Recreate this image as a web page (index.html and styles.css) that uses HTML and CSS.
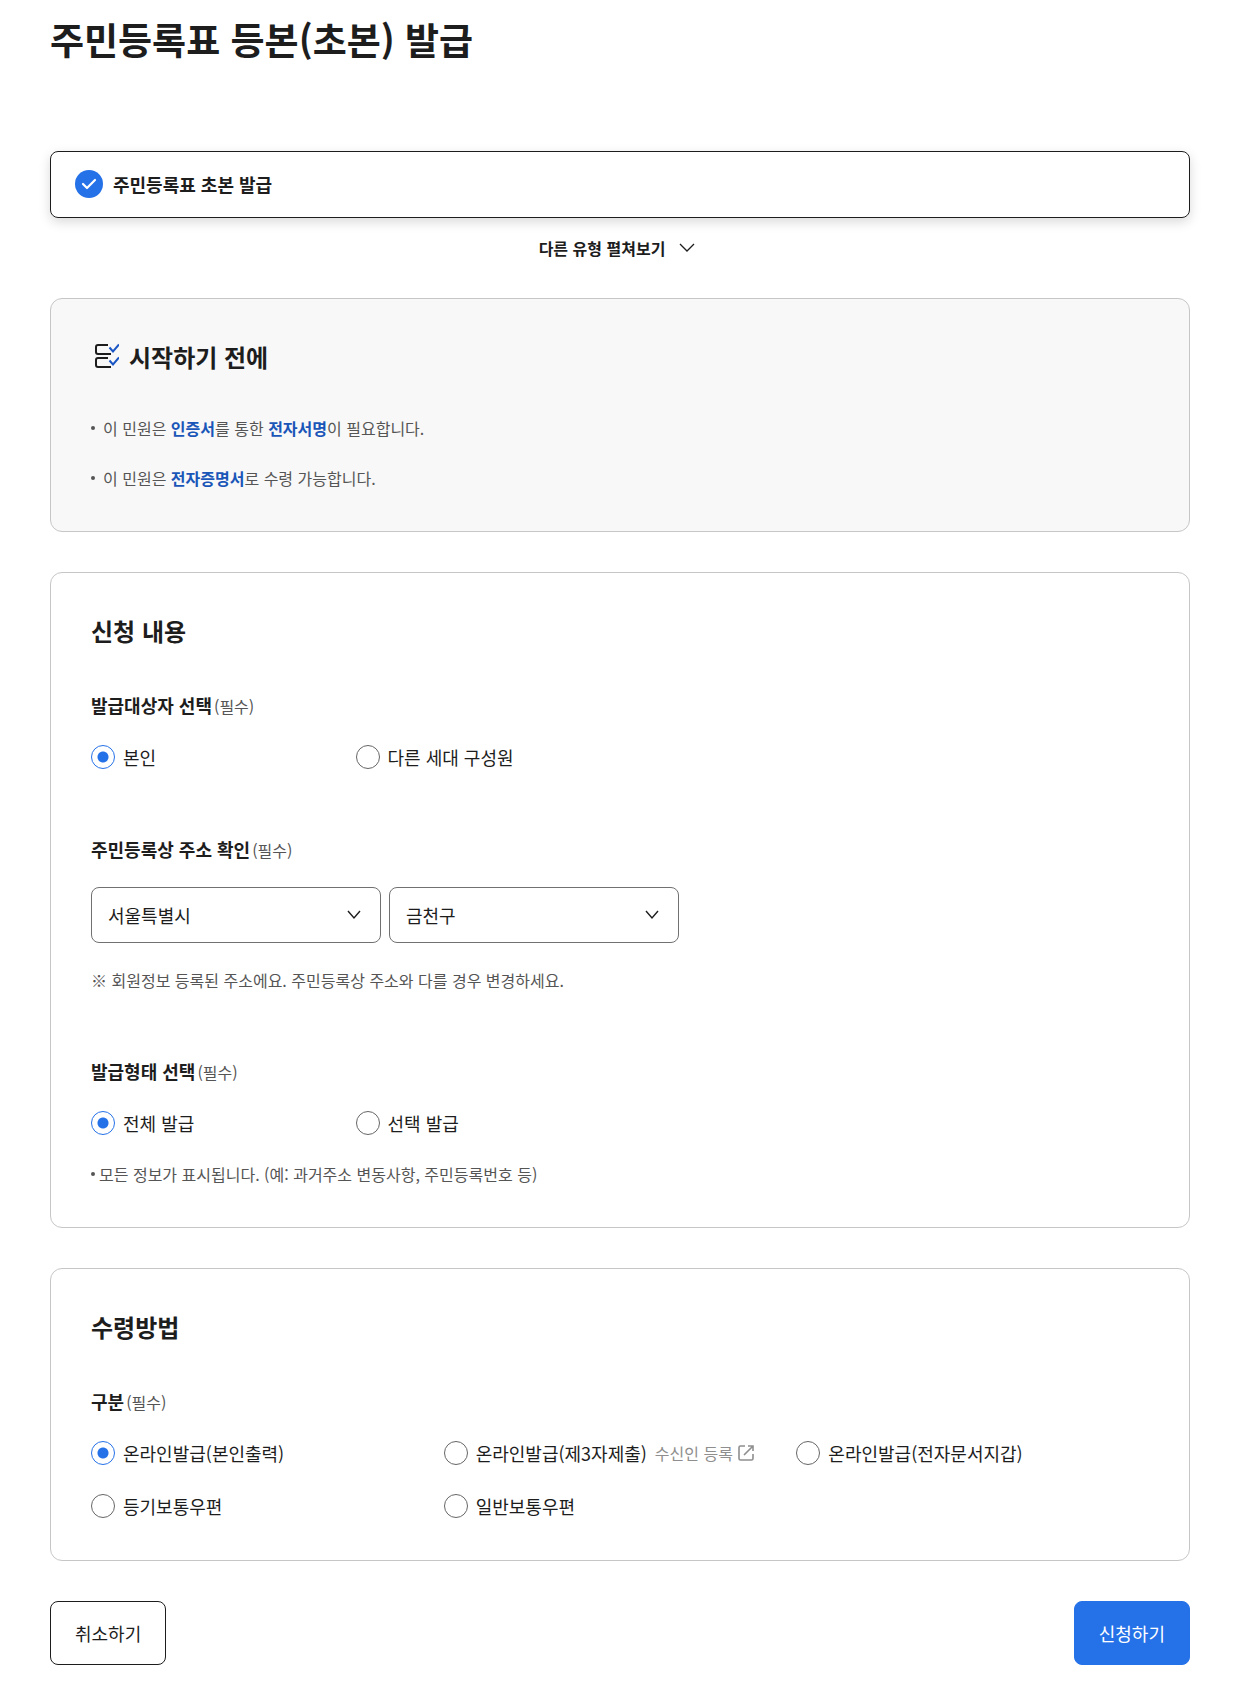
FILE: index.html
```html
<!DOCTYPE html>
<html lang="ko">
<head>
    <meta charset="UTF-8">
    <meta name="viewport" content="width=device-width, initial-scale=1.0">
    <title>주민등록표 등본(초본) 발급</title>
    <link rel="stylesheet" href="styles.css">
</head>
<body>
    <main class="container">
        <h1 class="page-title">주민등록표 등본(초본) 발급</h1>

        <!-- 민원 유형 -->
        <div class="type-card">
            <svg class="type-check" width="28" height="28" viewBox="0 0 28 28" fill="none" aria-hidden="true">
                <circle cx="14" cy="14" r="14" fill="#2571e8"/>
                <path d="M8 14l4 4 8-8" stroke="#fff" stroke-width="2.200" stroke-linecap="round" stroke-linejoin="round"/>
            </svg>
            <strong>주민등록표 초본 발급</strong>
        </div>
        <button type="button" class="btn-expand">
            다른 유형 펼쳐보기
            <svg width="16" height="10" viewBox="0 0 16 10" fill="none" stroke="#1d1d1d" stroke-width="1.3" aria-hidden="true">
                <path d="M1 1l7 7 7-7"/>
            </svg>
        </button>

        <!-- 안내 -->
        <section class="card card-guide">
            <h2 class="card-title">
                <svg class="guide-icon" width="28" height="28" viewBox="0 0 28 28" fill="none" stroke-width="2" aria-hidden="true">
                    <path d="M17 2H7Q5 2 5 4V9Q5 11 7 11H20M17 15H7Q5 15 5 17V22Q5 24 7 24H20" stroke="#1d1d1d"/>
                    <path d="M18.500 4.500l3.500 4 6-7M18.500 17.500l3.500 4 6-7" stroke="#1a56c4"/>
                </svg>
                시작하기 전에
            </h2>
            <ul class="guide-list">
                <li>이 민원은 <strong>인증서</strong>를 통한 <strong>전자서명</strong>이 필요합니다.</li>
                <li>이 민원은 <strong>전자증명서</strong>로 수령 가능합니다.</li>
            </ul>
        </section>

        <form>
            <!-- 신청 내용 -->
            <section class="card">
                <h2 class="card-title">신청 내용</h2>

                <fieldset class="field">
                    <legend>발급대상자 선택<span class="required">(필수)</span></legend>
                    <div class="radio-list col-4">
                        <label class="radio"><input type="radio" name="target" checked>본인</label>
                        <label class="radio"><input type="radio" name="target">다른 세대 구성원</label>
                    </div>
                </fieldset>

                <fieldset class="field">
                    <legend>주민등록상 주소 확인<span class="required">(필수)</span></legend>
                    <div class="select-list">
                        <div class="select">
                            <select aria-label="시도">
                                <option>서울특별시</option>
                            </select>
                            <svg width="14" height="10" viewBox="0 0 14 10" fill="none" stroke="#1d1d1d" stroke-width="1.4" aria-hidden="true">
                                <path d="M1 1l6 7 6-7"/>
                            </svg>
                        </div>
                        <div class="select">
                            <select aria-label="시군구">
                                <option>금천구</option>
                            </select>
                            <svg width="14" height="10" viewBox="0 0 14 10" fill="none" stroke="#1d1d1d" stroke-width="1.4" aria-hidden="true">
                                <path d="M1 1l6 7 6-7"/>
                            </svg>
                        </div>
                    </div>
                    <p class="note">※ 회원정보 등록된 주소에요. 주민등록상 주소와 다를 경우 변경하세요.</p>
                </fieldset>

                <fieldset class="field">
                    <legend>발급형태 선택<span class="required">(필수)</span></legend>
                    <div class="radio-list col-4">
                        <label class="radio"><input type="radio" name="form" checked>전체 발급</label>
                        <label class="radio"><input type="radio" name="form">선택 발급</label>
                    </div>
                    <p class="note note-dot">모든 정보가 표시됩니다. (예: 과거주소 변동사항, 주민등록번호 등)</p>
                </fieldset>
            </section>

            <!-- 수령방법 -->
            <section class="card">
                <h2 class="card-title">수령방법</h2>
                <fieldset class="field">
                    <legend>구분<span class="required">(필수)</span></legend>
                    <div class="radio-list col-3">
                        <label class="radio"><input type="radio" name="receive" checked>온라인발급(본인출력)</label>
                        <div class="radio-wrap">
                            <label class="radio"><input type="radio" name="receive">온라인발급(제3자제출)</label>
                            <a href="#" class="link-out">수신인 등록
                                <svg width="18" height="18" viewBox="0 0 18 18" fill="none" stroke="#8e8e8e" stroke-width="1.600" aria-hidden="true">
                                    <path d="M8 2H3.500Q2 2 2 3.500V14.500Q2 16 3.500 16H14.500Q16 16 16 14.500V10M11 2h5v5M16 2L7 11"/>
                                </svg>
                            </a>
                        </div>
                        <label class="radio"><input type="radio" name="receive">온라인발급(전자문서지갑)</label>
                        <label class="radio"><input type="radio" name="receive">등기보통우편</label>
                        <label class="radio"><input type="radio" name="receive">일반보통우편</label>
                    </div>
                </fieldset>
            </section>

            <div class="btn-area">
                <button type="button" class="btn">취소하기</button>
                <button type="submit" class="btn btn-primary">신청하기</button>
            </div>
        </form>
    </main>
</body>
</html>
```
FILE: styles.css
```css
* {
    box-sizing: border-box;
}
body {
    margin: 0;
    background-color: #fff;
    color: #1d1d1d;
    font-family: "Noto Sans CJK KR", sans-serif;
    font-size: 18px;
    line-height: 28px;
}
button, select {
    font-family: inherit;
    font-size: inherit;
    color: inherit;
}
.container {
    padding: 11px 50px 26px;
}
.page-title {
    margin: 0 0 84px;
    font-size: 37px;
    line-height: 56px;
}

/* 민원 유형 */
.type-card {
    display: flex;
    align-items: center;
    gap: 10px;
    padding: 18px 24px 19px;
    border: 1px solid #1d1d1d;
    border-radius: 8px;
    box-shadow: 0 4px 12px rgba(0, 0, 0, 0.15);
}
.btn-expand {
    display: flex;
    align-items: center;
    gap: 14px;
    height: 60px;
    margin: 0 auto 20px;
    padding: 0 6px 0 0;
    border: none;
    background: none;
    font-size: 16px;
    font-weight: bold;
    cursor: pointer;
}

/* 카드 */
.card {
    margin-bottom: 40px;
    padding: 40px;
    border: 1px solid #c6c6c6;
    border-radius: 12px;
}
.card-guide {
    background-color: #f8f8f8;
}
.card-title {
    display: flex;
    align-items: center;
    gap: 10px;
    margin: 0 0 40px;
    font-size: 24px;
    line-height: 36px;
}
.guide-list {
    display: flex;
    flex-direction: column;
    gap: 24px;
    margin: 0;
    padding: 0;
    list-style: none;
    color: #555;
    font-size: 16px;
    line-height: 26px;
}
.guide-list li::before,
.note-dot::before {
    content: "";
    display: inline-block;
    width: 4px;
    height: 4px;
    margin-right: 8px;
    border-radius: 50%;
    background-color: #555;
    vertical-align: 5px;
}
.guide-list strong {
    color: #1a56b8;
}

/* 입력 항목 */
.field {
    margin: 0;
    padding: 0;
    border: none;
}
.field + .field {
    margin-top: 62px;
}
.field legend {
    margin-bottom: 22px;
    padding: 0;
    font-weight: bold;
    line-height: 32px;
}
.required {
    margin-left: 2px;
    color: #555;
    font-size: 16px;
    font-weight: normal;
    line-height: 24px;
}
.radio-list {
    display: grid;
    row-gap: 25px;
}
.col-4 {
    grid-template-columns: repeat(4, 1fr);
}
.col-3 {
    grid-template-columns: repeat(3, 1fr);
}
.radio-wrap {
    display: flex;
    gap: 8px;
}
.radio {
    display: flex;
    align-items: center;
    gap: 8px;
    white-space: nowrap;
}
.radio input {
    appearance: none;
    width: 24px;
    height: 24px;
    margin: 0;
    border: 1px solid #666;
    border-radius: 50%;
    background-color: #fff;
}
.radio input:checked {
    border-color: #2571e8;
    background: radial-gradient(circle, #2571e8 5px, #fff 6px);
}
.link-out {
    display: flex;
    align-items: center;
    gap: 4px;
    color: #8e8e8e;
    font-size: 16px;
    text-decoration: none;
    white-space: nowrap;
}
.select-list {
    display: flex;
    gap: 8px;
}
.select {
    position: relative;
    width: 290px;
}
.select select {
    appearance: none;
    width: 100%;
    height: 56px;
    padding: 0 48px 0 16px;
    border: 1px solid #717171;
    border-radius: 8px;
    background-color: #fff;
}
.select svg {
    position: absolute;
    top: 23px;
    right: 20px;
    pointer-events: none;
}
.note {
    margin: 24px 0 0;
    color: #555;
    font-size: 16px;
    line-height: 26px;
}
.note-dot::before {
    margin-right: 4px;
}

/* 버튼 */
.btn-area {
    display: flex;
    justify-content: space-between;
}
.btn {
    height: 64px;
    padding: 0 24px;
    border: 1px solid #1d1d1d;
    border-radius: 8px;
    background-color: #fff;
    cursor: pointer;
}
.btn-primary {
    border-color: #2571e8;
    background-color: #2571e8;
    color: #fff;
}
```
